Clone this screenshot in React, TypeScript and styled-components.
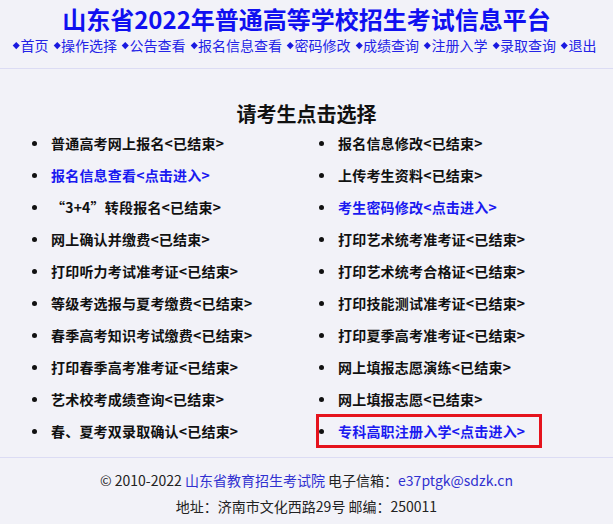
import styled, { createGlobalStyle } from "styled-components";

const GlobalStyle = createGlobalStyle`
  html, body {
    margin: 0;
    padding: 0;
    background: #f2f2f8;
  }
  body {
    font-family: "Noto Sans CJK SC", "Noto Sans", sans-serif;
    color: #111;
  }
`;

const Header = styled.header`
  padding: 4px 0 13px;
  border-bottom: 1px solid #dcdcf4;
  text-align: center;
`;

const Title = styled.h1`
  margin: 0;
  font-size: 24px;
  line-height: 30px;
  font-weight: bold;
  color: #1010f0;
`;

const Nav = styled.nav`
  margin-top: 1px;
  padding: 0 0 0 13px;
  display: flex;
  gap: 5px;
  font-size: 14px;
  line-height: 20px;
`;

const NavLink = styled.a`
  display: inline-flex;
  align-items: center;
  color: #2323e6;
  text-decoration: none;
  &::before {
    content: "";
    width: 4.5px;
    height: 4.5px;
    margin: 0 2px 0 1px;
    background: #1a1ae0;
    transform: rotate(45deg);
  }
`;

const Main = styled.main`
  padding-top: 32px;
  padding-bottom: 10px;
  border-bottom: 1px solid #dcdcf4;
`;

const Heading = styled.h2`
  margin: 0;
  text-align: center;
  font-size: 20px;
  line-height: 26px;
  font-weight: bold;
  color: #111;
`;

const Columns = styled.div`
  display: grid;
  grid-template-columns: 287px 1fr;
  padding-left: 29px;
`;

const List = styled.ul`
  margin: 0;
  padding: 0;
  list-style: none;
`;

const Item = styled.li<{ $boxed?: boolean }>`
  display: flex;
  align-items: center;
  box-sizing: border-box;
  width: fit-content;
  height: ${(p) => (p.$boxed ? "34px" : "32px")};
  margin: ${(p) => (p.$boxed ? "-1px 0" : "0")};
  padding-right: 14px;
  border: 3px solid ${(p) => (p.$boxed ? "#e5131d" : "transparent")};
  font-size: 14px;
  font-weight: bold;
  &::before {
    content: "";
    flex: none;
    width: 5px;
    height: 5px;
    margin-right: 14px;
    border-radius: 50%;
    background: #111;
  }
`;

const ItemText = styled.a<{ $open?: boolean }>`
  color: ${(p) => (p.$open ? "#1a1af0" : "#111")};
  text-decoration: none;
  letter-spacing: 0.2px;
`;

const Footer = styled.footer`
  padding-top: 9px;
  text-align: center;
  font-size: 14px;
  line-height: 26px;
  color: #222;
`;

const FooterLink = styled.a`
  color: #3030d0;
  text-decoration: none;
`;

type Entry = { name: string; open?: boolean; boxed?: boolean };

const navItems = [
  "首页",
  "操作选择",
  "公告查看",
  "报名信息查看",
  "密码修改",
  "成绩查询",
  "注册入学",
  "录取查询",
  "退出",
];

const leftItems: Entry[] = [
  { name: "普通高考网上报名" },
  { name: "报名信息查看", open: true },
  { name: "“3+4”转段报名" },
  { name: "网上确认并缴费" },
  { name: "打印听力考试准考证" },
  { name: "等级考选报与夏考缴费" },
  { name: "春季高考知识考试缴费" },
  { name: "打印春季高考准考证" },
  { name: "艺术校考成绩查询" },
  { name: "春、夏考双录取确认" },
];

const rightItems: Entry[] = [
  { name: "报名信息修改" },
  { name: "上传考生资料" },
  { name: "考生密码修改", open: true },
  { name: "打印艺术统考准考证" },
  { name: "打印艺术统考合格证" },
  { name: "打印技能测试准考证" },
  { name: "打印夏季高考准考证" },
  { name: "网上填报志愿演练" },
  { name: "网上填报志愿" },
  { name: "专科高职注册入学", open: true, boxed: true },
];

function EntryList({ items }: { items: Entry[] }) {
  return (
    <List>
      {items.map((it) => (
        <Item key={it.name} $boxed={it.boxed}>
          <ItemText href="#" $open={it.open}>
            {it.name}
            {it.open ? "<点击进入>" : "<已结束>"}
          </ItemText>
        </Item>
      ))}
    </List>
  );
}

export default function App() {
  return (
    <>
      <GlobalStyle />
      <Header>
        <Title>山东省2022年普通高等学校招生考试信息平台</Title>
        <Nav>
          {navItems.map((n) => (
            <NavLink key={n} href="#">
              {n}
            </NavLink>
          ))}
        </Nav>
      </Header>
      <Main>
        <Heading>请考生点击选择</Heading>
        <Columns>
          <EntryList items={leftItems} />
          <EntryList items={rightItems} />
        </Columns>
      </Main>
      <Footer>
        <div>
          © 2010-2022 <FooterLink href="#">山东省教育招生考试院</FooterLink>{" "}
          电子信箱：<FooterLink href="#">e37ptgk@sdzk.cn</FooterLink>
        </div>
        <div>地址：济南市文化西路29号 邮编：250011</div>
      </Footer>
    </>
  );
}
